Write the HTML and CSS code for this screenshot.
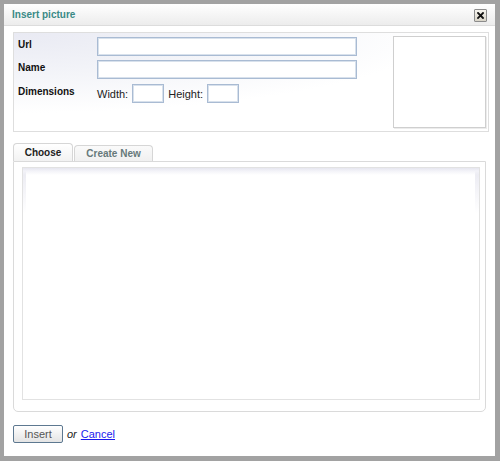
FILE: index.html
```html
<!DOCTYPE html>
<html>
<head>
<meta charset="utf-8">
<link rel="stylesheet" href="styles.css">
</head>
<body>
<div class="dialog">
  <div class="titlebar">
    <span class="title">Insert picture</span>
    <span class="close"><svg width="7" height="7" viewBox="0 0 7 7"><path d="M1 1 L6 6 M6 1 L1 6" stroke="#111" stroke-width="1.8" stroke-linecap="square"/></svg></span>
  </div>
  <div class="content">
    <div class="props">
      <div class="fields">
        <div class="row"><label class="lbl">Url</label><input class="txt wide" type="text"></div>
        <div class="row"><label class="lbl">Name</label><input class="txt wide" type="text"></div>
        <div class="row dims"><label class="lbl">Dimensions</label><span class="dlbl">Width:</span><input class="txt small" type="text"><span class="dlbl h">Height:</span><input class="txt small" type="text"></div>
      </div>
      <div class="preview"></div>
    </div>
    <div class="tabs">
      <span class="tab active">Choose</span>
      <span class="tab">Create New</span>
    </div>
    <div class="tabpanel">
      <div class="browser"></div>
    </div>
    <div class="footer">
      <button class="btn">Insert</button>
      <span class="or">or</span>
      <a class="cancel" href="#">Cancel</a>
    </div>
  </div>
</div>
</body>
</html>
```
FILE: styles.css
```css
html, body {
  margin: 0;
  padding: 0;
  background: #a2a2a2;
  font-family: "Liberation Sans", Arial, sans-serif;
}
.dialog {
  margin: 4px 0 0 4px;
  width: 491px;
  height: 452px;
  background: #fff;
}
.titlebar {
  height: 21px;
  border-bottom: 1px solid #dcdcdc;
  background: linear-gradient(#ffffff, #ececec);
  display: flex;
  align-items: center;
  justify-content: space-between;
  padding: 0 8px 0 8px;
}
.title {
  font-size: 10px;
  font-weight: bold;
  color: #3a8a86;
}
.close {
  box-sizing: border-box;
  width: 13px;
  height: 13px;
  border: 1px solid #8c8c8c;
  border-radius: 1px;
  background: linear-gradient(#f6f4ee, #d8d4c8);
  display: flex;
  align-items: center;
  justify-content: center;
  margin-top: 1px;
}
.content {
  padding: 6px 6px 0 9px;
}
.props {
  height: 98px;
  border: 1px solid #dedede;
  background: radial-gradient(ellipse 420px 80px at 0 0, #e9eaf3 0%, #f4f5f9 55%, #ffffff 100%);
  display: flex;
  justify-content: space-between;
}
.fields {
  padding: 4px 0 0 4px;
  display: flex;
  flex-direction: column;
  gap: 4px;
}
.row {
  display: flex;
  align-items: flex-start;
  height: 19px;
}
.row.dims {
  align-items: center;
  height: 18px;
  margin-top: 1px;
}
.lbl {
  width: 79px;
  font-size: 10px;
  font-weight: bold;
  color: #111;
  line-height: 12px;
  padding-top: 2px;
}
.dims .lbl {
  align-self: flex-start;
}
.txt {
  box-sizing: border-box;
  margin: 0;
  padding: 0;
  border: 1px solid #a9bbd3;
  box-shadow: inset 0 0 0 1px #d8e1ec;
  background: #fff;
  outline: none;
}
.wide {
  width: 260px;
  height: 19px;
}
.small {
  width: 32px;
  height: 19px;
}
.dlbl {
  font-size: 11px;
  color: #222;
  margin-right: 4px;
  padding-top: 1px;
}
.dlbl.h {
  margin-left: 4px;
}
.preview {
  width: 91px;
  height: 90px;
  margin: 3px 2px 0 0;
  border: 1px solid #cfcfcf;
  box-shadow: 1px 1px 0 #ececec;
  background: #fff;
}
.tabs {
  margin-top: 11px;
  display: flex;
  align-items: flex-end;
  gap: 1px;
  height: 18px;
}
.tab {
  box-sizing: border-box;
  font-size: 10px;
  font-weight: bold;
  display: flex;
  align-items: center;
  justify-content: center;
  border: 1px solid #d6d6d6;
  border-bottom: none;
  border-radius: 4px 4px 0 0;
}
.tab.active {
  width: 60px;
  height: 18px;
  color: #222;
  background: linear-gradient(#ffffff, #f2f2f2);
}
.tab:not(.active) {
  width: 79px;
  height: 16px;
  color: #66797a;
  background: linear-gradient(#fafafa, #f0f0f0);
}
.tabpanel {
  box-sizing: border-box;
  width: 473px;
  height: 251px;
  border: 1px solid #dadada;
  border-radius: 0 0 5px 5px;
  padding: 5px 5px 0 8px;
}
.browser {
  box-sizing: border-box;
  width: 458px;
  height: 233px;
  border: 1px solid #e2e2e2;
  background:
    linear-gradient(#e6e6ef, #f3f3f8 3px, rgba(255,255,255,0) 7px) top left / 100% 7px no-repeat,
    linear-gradient(#e9e9f1, rgba(255,255,255,0) 45px) top left / 3px 100% no-repeat,
    linear-gradient(#e9e9f1, rgba(255,255,255,0) 45px) top right / 4px 100% no-repeat,
    #fff;
}
.footer {
  margin-top: 13px;
  display: flex;
  align-items: center;
  font-size: 11px;
}
.btn {
  box-sizing: border-box;
  width: 50px;
  height: 18px;
  margin: 0;
  padding: 0;
  border: 1px solid #5d7890;
  border-radius: 2px;
  background: linear-gradient(#ffffff, #e4e4e4);
  font-family: "Liberation Sans", Arial, sans-serif;
  font-size: 11px;
  color: #555;
}
.or {
  font-style: italic;
  color: #222;
  margin-left: 4px;
}
.cancel {
  margin-left: 4px;
  color: #1a1aee;
  text-decoration: underline;
}
```
